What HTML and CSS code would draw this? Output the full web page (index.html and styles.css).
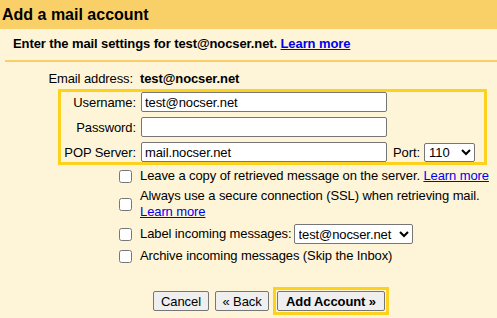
FILE: index.html
```html
<!doctype html>
<html>
  <head>
    <title>Add a mail account</title>
    <link rel="stylesheet" href="styles.css">
  </head>
  <body>
    <div class='header'>Add a mail account</div>
    <div class='intro'>Enter the mail settings for test@nocser.net. <a href='#'>Learn more</a></div>
    <div class='form'>
      <div class='emailRow'>
        <span class='label'>Email address:</span>
        <span class='address'>test@nocser.net</span>
      </div>
      <div class='highlight'>
        <div class='field'>
          <label class='boxLabel'>Username:</label>
          <input class='text' type='text' value='test@nocser.net' />
        </div>
        <div class='field'>
          <label class='boxLabel'>Password:</label>
          <input class='text' type='password' value='' />
        </div>
        <div class='field'>
          <label class='boxLabel'>POP Server:</label>
          <input class='text' type='text' value='mail.nocser.net' />
          <label class='portLabel'>Port:</label>
          <select class='port'>
            <option>110</option>
            <option>995</option>
          </select>
        </div>
      </div>
      <div class='options'>
        <div class='option'>
          <input type='checkbox' />
          <div>Leave a copy of retrieved message on the server. <a href='#'>Learn more</a></div>
        </div>
        <div class='option'>
          <input type='checkbox' />
          <div>Always use a secure connection (SSL) when retrieving mail.<br /><a href='#'>Learn more</a></div>
        </div>
        <div class='option'>
          <input type='checkbox' />
          <div>Label incoming messages:</div>
          <select class='labelSelect'>
            <option>test@nocser.net</option>
          </select>
        </div>
        <div class='option'>
          <input type='checkbox' />
          <div>Archive incoming messages (Skip the Inbox)</div>
        </div>
      </div>
      <div class='buttons'>
        <input class='btn cancel' type='button' value='Cancel' />
        <input class='btn back' type='button' value='&laquo; Back' />
        <span class='primaryWrap'><input class='btn primary' type='button' value='Add Account &raquo;' /></span>
      </div>
    </div>
  </body>
</html>
```
FILE: styles.css
```css
body {
  margin:             0;
  background-color:   #fef5d8;
  font-family:        "Liberation Sans", Arial, sans-serif;
  font-size:          13px;
  letter-spacing:     -0.1px;
  color:              #000;
}
a {
  color:              #0000ee;
}
.header {
  background-color:   #f9d067;
  height:             29px;
  line-height:        30px;
  padding-left:       2px;
  font-size:          16px;
  font-weight:        bold;
  letter-spacing:     0;
}
.intro {
  margin-left:        5px;
  padding:            7px 8px 8px;
  line-height:        16px;
  font-weight:        bold;
  border-bottom:      2px solid #f9d067;
}
.form {
  padding-top:        7px;
}
.emailRow {
  display:            flex;
  gap:                7px;
  height:             20px;
  line-height:        20px;
}
.label {
  width:              133px;
  text-align:         right;
}
.address {
  font-weight:        bold;
}
.highlight {
  margin-left:        58px;
  width:              423px;
  border:             3px solid #fdd21e;
  display:            flex;
  flex-direction:     column;
  gap:                5px;
}
.field {
  display:            flex;
  align-items:        center;
  height:             20px;
}
.boxLabel {
  width:              75px;
  text-align:         right;
  margin-right:       5px;
}
.text {
  box-sizing:         border-box;
  width:              246px;
  height:             20px;
  margin:             0;
  padding:            0 3px;
  border:             1px solid #767676;
  border-radius:      2px;
  background-color:   #fff;
  font-family:        inherit;
  font-size:          13px;
  letter-spacing:     inherit;
}
.portLabel {
  margin:             0 4px 0 6px;
}
.port {
  box-sizing:         border-box;
  width:              51px;
  height:             19px;
  margin:             0;
  border:             1px solid #767676;
  border-radius:      2px;
  background-color:   #fff;
  font-family:        inherit;
  font-size:          13px;
}
.options {
  padding:            3px 0 0 119px;
}
.option {
  display:            flex;
  align-items:        center;
  gap:                8px;
  line-height:        16px;
  margin-bottom:      4px;
}
.option input[type='checkbox'] {
  margin:             0;
  width:              13px;
  height:             13px;
}
.labelSelect {
  box-sizing:         border-box;
  width:              119px;
  height:             20px;
  margin:             0 0 0 -6px;
  border:             1px solid #767676;
  border-radius:      2px;
  background-color:   #fff;
  font-family:        inherit;
  font-size:          13px;
  letter-spacing:     inherit;
}
.buttons {
  display:            flex;
  align-items:        center;
  padding:            19px 0 0 153px;
}
.primaryWrap {
  border:             3px solid #fdd21e;
  padding:            1px;
  margin-left:        4px;
  display:            flex;
}
.btn {
  box-sizing:         border-box;
  height:             20px;
  margin:             0;
  padding:            0;
  border:             1px solid #767676;
  border-radius:      2px;
  background-color:   #efefef;
  font-family:        inherit;
  font-size:          13px;
  letter-spacing:     inherit;
}
.cancel {
  width:              56px;
  margin-right:       6px;
}
.back {
  width:              54px;
}
.primary {
  width:              108px;
  font-weight:        bold;
}
```
